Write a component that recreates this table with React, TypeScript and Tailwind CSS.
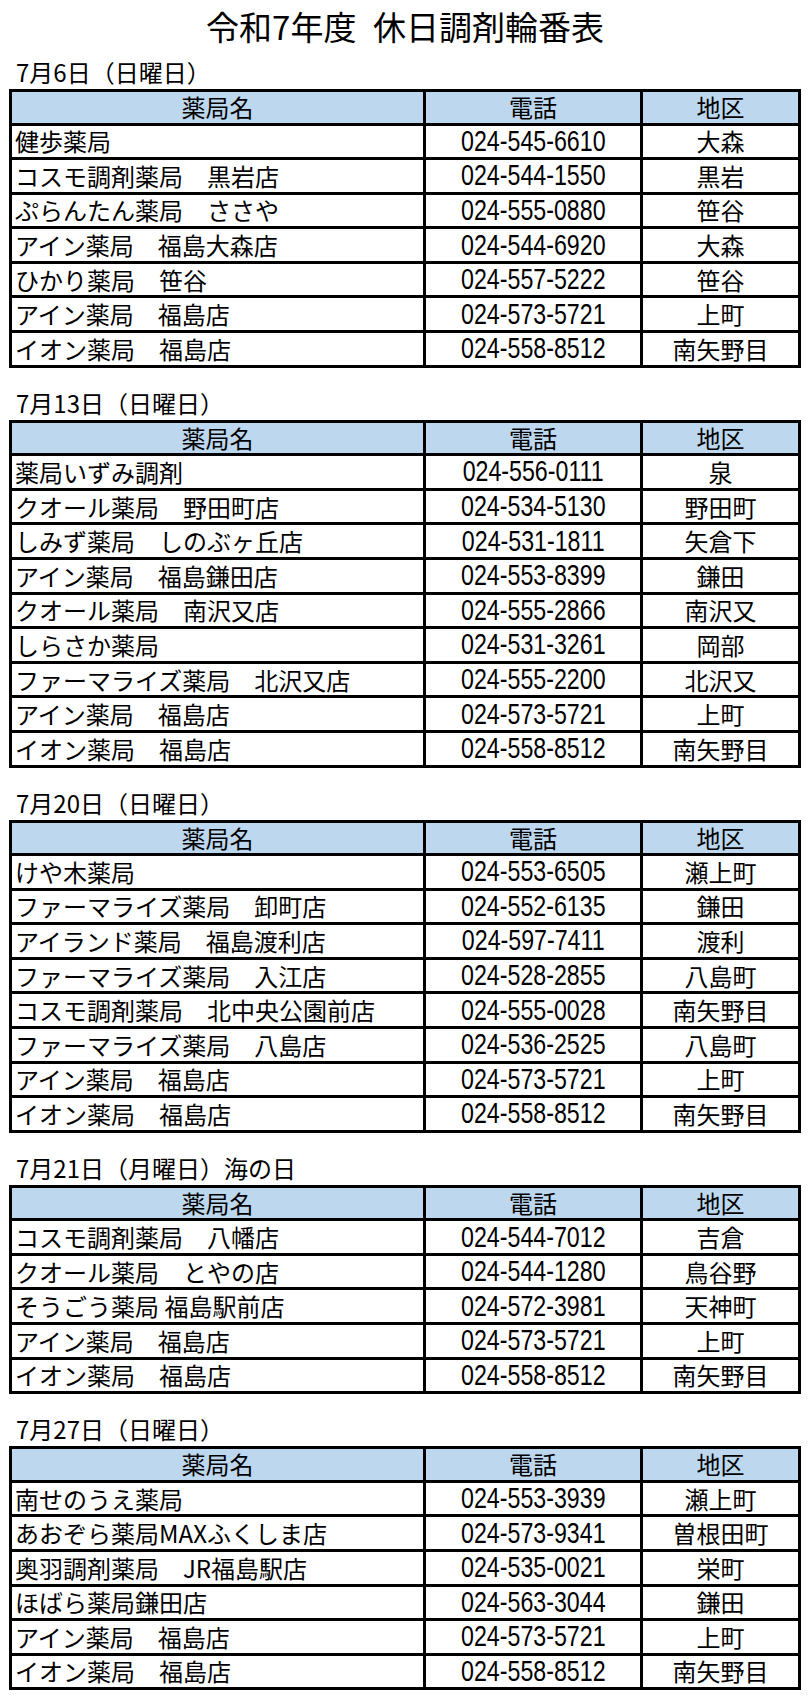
type Row = [string, string, string];

interface Day {
  label: string;
  rows: Row[];
}

const FUKUSHIMA: Row[] = [
  ['アイン薬局　福島店', '024-573-5721', '上町'],
  ['イオン薬局　福島店', '024-558-8512', '南矢野目'],
];

const days: Day[] = [
  {
    label: '7月6日（日曜日）',
    rows: [
      ['健歩薬局', '024-545-6610', '大森'],
      ['コスモ調剤薬局　黒岩店', '024-544-1550', '黒岩'],
      ['ぷらんたん薬局　ささや', '024-555-0880', '笹谷'],
      ['アイン薬局　福島大森店', '024-544-6920', '大森'],
      ['ひかり薬局　笹谷', '024-557-5222', '笹谷'],
      ...FUKUSHIMA,
    ],
  },
  {
    label: '7月13日（日曜日）',
    rows: [
      ['薬局いずみ調剤', '024-556-0111', '泉'],
      ['クオール薬局　野田町店', '024-534-5130', '野田町'],
      ['しみず薬局　しのぶヶ丘店', '024-531-1811', '矢倉下'],
      ['アイン薬局　福島鎌田店', '024-553-8399', '鎌田'],
      ['クオール薬局　南沢又店', '024-555-2866', '南沢又'],
      ['しらさか薬局', '024-531-3261', '岡部'],
      ['ファーマライズ薬局　北沢又店', '024-555-2200', '北沢又'],
      ...FUKUSHIMA,
    ],
  },
  {
    label: '7月20日（日曜日）',
    rows: [
      ['けや木薬局', '024-553-6505', '瀬上町'],
      ['ファーマライズ薬局　卸町店', '024-552-6135', '鎌田'],
      ['アイランド薬局　福島渡利店', '024-597-7411', '渡利'],
      ['ファーマライズ薬局　入江店', '024-528-2855', '八島町'],
      ['コスモ調剤薬局　北中央公園前店', '024-555-0028', '南矢野目'],
      ['ファーマライズ薬局　八島店', '024-536-2525', '八島町'],
      ...FUKUSHIMA,
    ],
  },
  {
    label: '7月21日（月曜日）海の日',
    rows: [
      ['コスモ調剤薬局　八幡店', '024-544-7012', '吉倉'],
      ['クオール薬局　とやの店', '024-544-1280', '鳥谷野'],
      ['そうごう薬局 福島駅前店', '024-572-3981', '天神町'],
      ...FUKUSHIMA,
    ],
  },
  {
    label: '7月27日（日曜日）',
    rows: [
      ['南せのうえ薬局', '024-553-3939', '瀬上町'],
      ['あおぞら薬局MAXふくしま店', '024-573-9341', '曽根田町'],
      ['奥羽調剤薬局　JR福島駅店', '024-535-0021', '栄町'],
      ['ほばら薬局鎌田店', '024-563-3044', '鎌田'],
      ...FUKUSHIMA,
    ],
  },
];

// tall narrow digits like the sheet's font
function Phone({ value }: { value: string }) {
  return (
    <span className="inline-block font-['Liberation_Sans',sans-serif] text-[29px] leading-none scale-x-[0.8]">
      {value}
    </span>
  );
}

function DayTable({ day, first }: { day: Day; first: boolean }) {
  return (
    <section className={first ? 'mt-[10px]' : 'mt-[21px]'}>
      <h2 className="h-[28px] pl-[7px] text-[24px] leading-[28px] font-normal mb-[3px]">{day.label}</h2>
      <div className="grid grid-cols-[411px_214px_155px] gap-[3px] bg-black p-[3px]">
        <div className="h-[30.5px] bg-[#bdd7ee] flex items-center justify-center">薬局名</div>
        <div className="h-[30.5px] bg-[#bdd7ee] flex items-center justify-center">電話</div>
        <div className="h-[30.5px] bg-[#bdd7ee] flex items-center justify-center">地区</div>
        {day.rows.map(([name, tel, area], i) => (
          <div key={i} className="contents">
            <div className="h-[31.6px] bg-white flex items-center pl-[3px] whitespace-nowrap">{name}</div>
            <div className="h-[31.6px] bg-white flex items-center justify-center">
              <Phone value={tel} />
            </div>
            <div className="h-[31.6px] bg-white flex items-center justify-center">{area}</div>
          </div>
        ))}
      </div>
    </section>
  );
}

export default function App() {
  return (
    <div className="w-[810px] min-h-[1700px] bg-white px-[9px] pt-[4px] text-black text-[24px] leading-[28px] font-['Noto_Sans_CJK_JP',sans-serif]">
      <h1 className="h-[44px] text-center text-[33px] leading-[44px] font-normal">
        令和7年度{'\u2002'}休日調剤輪番表
      </h1>
      {days.map((day, i) => (
        <DayTable key={day.label} day={day} first={i === 0} />
      ))}
    </div>
  );
}
